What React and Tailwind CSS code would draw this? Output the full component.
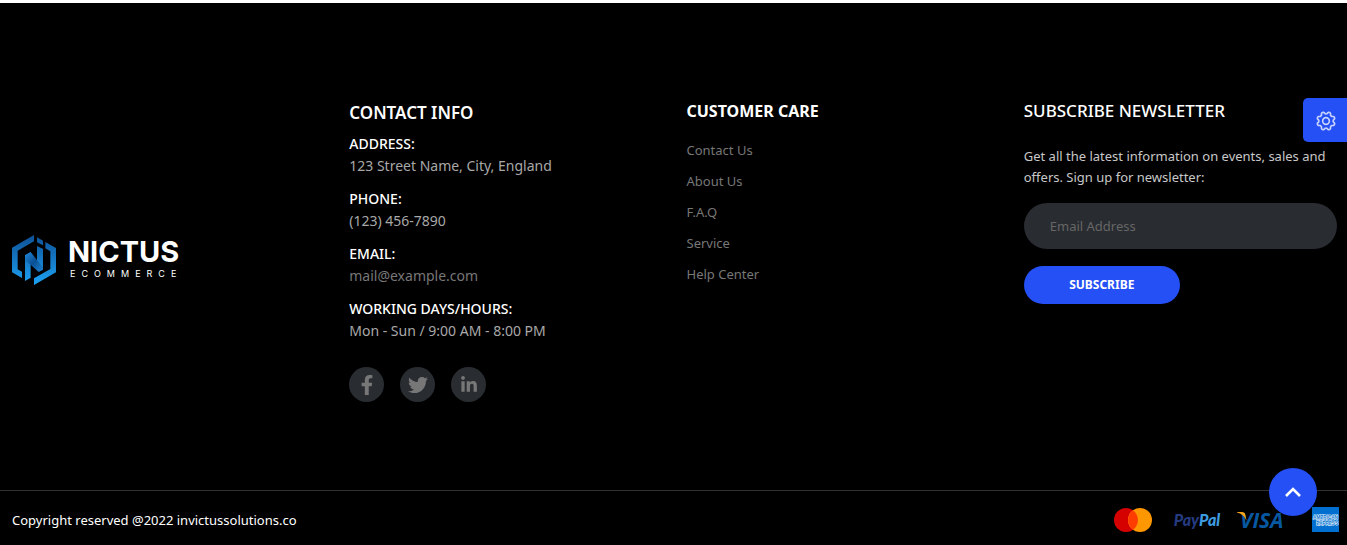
import { FaFacebookF, FaTwitter, FaLinkedinIn } from "react-icons/fa";

const contacts = [
  { label: "Address:", value: "123 Street Name, City, England" },
  { label: "Phone:", value: "(123) 456-7890" },
  { label: "Email:", value: "mail@example.com", href: "mailto:mail@example.com" },
  { label: "Working Days/Hours:", value: "Mon - Sun / 9:00 AM - 8:00 PM" },
];

const socials = [
  { name: "Facebook", Icon: FaFacebookF, size: "text-xl" },
  { name: "Twitter", Icon: FaTwitter, size: "text-xl" },
  { name: "LinkedIn", Icon: FaLinkedinIn, size: "text-lg" },
];

const careLinks = ["Contact Us", "About Us", "F.A.Q", "Service", "Help Center"];

// Outline of a cog with eight rounded teeth, centred in a 24x24 box.
const cogPath =
  Array.from({ length: 97 }, (_, i) => {
    const a = (i / 96) * Math.PI * 2;
    const r = 9.8 + 1.2 * Math.tanh(2 * Math.cos(8 * (a - Math.PI / 8)));
    return `${i ? "L" : "M"}${(12 + r * Math.cos(a)).toFixed(2)} ${(12 + r * Math.sin(a)).toFixed(2)}`;
  }).join("") + "Z";

function Logo() {
  return (
    <a href="#" className="inline-flex items-center gap-3 text-white">
      <svg viewBox="0 0 132 150" className="h-[50px] w-11" aria-hidden="true">
        <defs>
          <linearGradient id="hex" gradientUnits="userSpaceOnUse" x1="0" y1="0" x2="0" y2="150">
            <stop offset="0" stopColor="#0e5096" />
            <stop offset="1" stopColor="#1da2f4" />
          </linearGradient>
          <linearGradient id="diag" gradientUnits="userSpaceOnUse" x1="40" y1="60" x2="95" y2="110">
            <stop offset="0" stopColor="#1c7fd0" />
            <stop offset="0.45" stopColor="#0b4f93" />
            <stop offset="1" stopColor="#1b86d6" />
          </linearGradient>
        </defs>
        <g fill="url(#hex)">
          <path d="M66 0V19L17 47V103L30 110V129L0 112V38Z" />
          <path d="M39 61L56 51V128L39 138Z" />
          <path d="M75 7L93 17V31L75 22Z" />
          <path d="M75 33L93 42V98L75 88Z" />
          <path d="M100 21L132 39V112L66 150V130L115 102V49L100 40Z" />
        </g>
        <path d="M39 61L56 51L93 98V104L80 111L39 74Z" fill="url(#diag)" />
      </svg>
      <span className="flex flex-col font-['Inter',sans-serif]">
        <span className="text-[29px] leading-6 font-bold">NICTUS</span>
        <span className="mt-1 pl-0.5 text-[9px] leading-3 tracking-[6px]">ECOMMERCE</span>
      </span>
    </a>
  );
}

function Payments() {
  return (
    <ul className="flex items-center gap-6">
      <li className="flex w-10 justify-center">
        <svg viewBox="0 0 38 24" className="h-6 w-[38px] shrink-0" role="img" aria-label="Mastercard">
          <circle cx="12" cy="12" r="12" fill="#d50000" />
          <circle cx="26" cy="12" r="12" fill="#ff9800" />
          <path d="M19 2.3a12 12 0 0 1 0 19.4a12 12 0 0 1 0-19.4Z" fill="#ff3d00" />
        </svg>
      </li>
      <li className="flex w-10 justify-center font-['Lato',sans-serif] text-[16px] leading-6 font-black italic">
        <span className="text-[#253b80]">Pay</span>
        <span className="text-[#3d9be0]">Pal</span>
      </li>
      <li className="flex w-10 justify-center">
        <svg viewBox="0 0 50 24" className="h-6 w-[50px] shrink-0" role="img" aria-label="Visa">
          <text x="4" y="20" fill="#0758a0" fontSize="21" fontWeight="700" fontStyle="italic" fontFamily="Open Sans, sans-serif">VISA</text>
          <path d="M1 4H6C8 4 9 5 9.4 7L10.5 12.5C8.5 8.5 5.5 5.5 1 4.6Z" fill="#f9a51a" />
        </svg>
      </li>
      <li className="flex w-10 justify-center">
        <svg viewBox="0 0 27 25" className="h-[25px] w-[27px] shrink-0" role="img" aria-label="American Express">
          <rect width="27" height="25" fill="#016fd0" />
          <g fill="#016fd0" stroke="#fff" strokeWidth="0.9" paintOrder="stroke" fontFamily="Liberation Sans, sans-serif" fontWeight="700">
            <text x="13.5" y="12" textAnchor="middle" fontSize="4.6">AMERICAN</text>
            <text x="26" y="18" textAnchor="end" fontSize="4.6">EXPRESS</text>
          </g>
        </svg>
      </li>
    </ul>
  );
}

export default function App() {
  return (
    <div className="bg-white pt-[3px] font-['Noto_Sans',sans-serif] text-white">
      <footer className="bg-black">
        <div className="grid grid-cols-4 items-start gap-6 pt-24 pr-2.5 pb-16 pl-3">
          <div className="self-center">
            <Logo />
          </div>

          <section className="pt-0.5 pb-6">
            <h2 className="mb-2 text-[17px] leading-6 font-semibold uppercase">Contact Info</h2>
            <dl className="flex flex-col gap-[11px] text-[14px] leading-[22px]">
              {contacts.map(({ label, value, href }) => (
                <div key={label}>
                  <dt className="font-medium uppercase">{label}</dt>
                  <dd className="text-[#a8a8a8]">
                    {href ? <a href={href} className="text-[#777777]">{value}</a> : value}
                  </dd>
                </div>
              ))}
            </dl>
            <div className="mt-[25px] flex gap-4">
              {socials.map(({ name, Icon, size }) => (
                <a
                  key={name}
                  href="#"
                  aria-label={name}
                  className={`flex size-[35px] items-center justify-center rounded-full bg-[#292c31] text-[#777777] ${size}`}
                >
                  <Icon />
                </a>
              ))}
            </div>
          </section>

          <section>
            <h2 className="mb-4 text-[16px] leading-6 font-bold uppercase">Customer Care</h2>
            <ul className="flex flex-col gap-[9px] text-[13px] leading-[22px] text-[#777777]">
              {careLinks.map((link) => (
                <li key={link}>
                  <a href="#">{link}</a>
                </li>
              ))}
            </ul>
          </section>

          <section>
            <h2 className="mb-[23px] text-[17px] leading-6 font-medium uppercase">Subscribe Newsletter</h2>
            <p className="text-[13px] leading-[21px] text-[#c8c8c8]">
              Get all the latest information on events, sales and offers. Sign up for newsletter:
            </p>
            <form onSubmit={(e) => e.preventDefault()}>
              <input
                type="email"
                aria-label="Email Address"
                placeholder="Email Address"
                className="mt-[15px] block h-[46px] w-full rounded-full bg-[#292c31] px-[26px] text-[13px] placeholder:text-[#666666]"
              />
              <button
                type="submit"
                className="mt-[17px] block h-[38px] w-39 rounded-full bg-[#2450f5] text-[12px] font-bold uppercase"
              >
                Subscribe
              </button>
            </form>
          </section>
        </div>

        <div className="flex items-center justify-between border-t border-[#313131] pt-4 pr-0.5 pb-[13px] pl-3">
          <p className="text-[13px] leading-6">Copyright reserved @2022 invictussolutions.co</p>
          <Payments />
        </div>
      </footer>

      <button
        type="button"
        aria-label="Settings"
        className="fixed top-[98px] right-0 flex h-11 w-11 items-center justify-center rounded-l-[5px] bg-[#2450f5] pt-0.5 pl-0.5 text-[#c8d3fd]"
      >
        <svg viewBox="0 0 24 24" className="size-5" fill="none" stroke="currentColor" strokeWidth="2" strokeLinejoin="round" aria-hidden="true">
          <path d={cogPath} />
          <circle cx="12" cy="12" r="4" />
        </svg>
      </button>

      <a
        href="#"
        aria-label="Back to top"
        className="fixed right-[30px] bottom-[29px] flex size-12 items-center justify-center rounded-full bg-[#2450f5] text-white"
      >
        <svg viewBox="0 0 16 10" className="h-2.5 w-4" fill="none" stroke="currentColor" strokeWidth="2.6" aria-hidden="true">
          <path d="M1 9L8 2L15 9" />
        </svg>
      </a>
    </div>
  );
}
